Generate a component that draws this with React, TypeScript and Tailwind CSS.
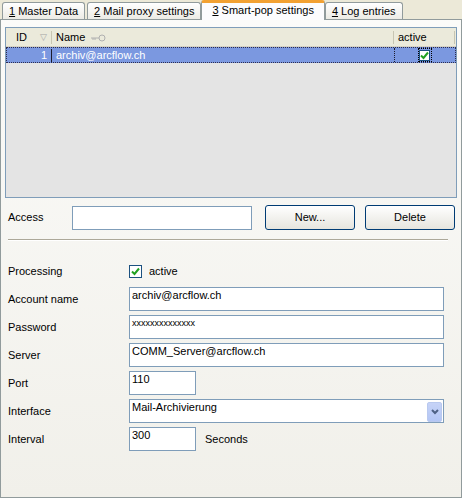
import React from "react";

const font = { fontFamily: '"Liberation Sans", Arial, sans-serif' };

function Check() {
  return (
    <svg width="9" height="9" viewBox="0 0 9 9">
      <path d="M1 4.5 L3.5 7 L8 1.5" fill="none" stroke="#21a121" strokeWidth="2" />
    </svg>
  );
}

function Tab({ n, label, active }: { n: string; label: string; active?: boolean }) {
  if (active) {
    return (
      <div className="relative z-10 -mx-[2px] -mb-px flex h-[20px] items-center rounded-t-[3px] border-x border-t-[3px] border-x-[#919b9c] border-t-[#f2a132] bg-[#fcfcfe] px-[10px] pb-[2px]">
        <span>
          <span className="underline">{n}</span> {label}
        </span>
      </div>
    );
  }
  return (
    <div className="flex h-[17px] items-center rounded-t-[3px] border border-b-0 border-[#919b9c] bg-gradient-to-b from-[#ffffff] to-[#ecebe5] px-[6px]">
      <span>
        <span className="underline">{n}</span> {label}
      </span>
    </div>
  );
}

function Field({ w, value, small }: { w: string; value?: string; small?: boolean }) {
  return (
    <div className={`h-[24px] ${w} border border-[#7f9db9] bg-white px-[2px] pt-[1px] ${small ? "text-[9px] leading-[12px]" : ""}`}>
      {value}
    </div>
  );
}

export default function App() {
  return (
    <div className="h-[498px] w-[462px] bg-[#ece9d8] text-[11px] leading-[13px] text-black" style={font}>
      <div className="flex h-[19px] items-end gap-[2px] pl-[2px]">
        <Tab n="1" label="Master Data" />
        <Tab n="2" label="Mail proxy settings" />
        <Tab n="3" label="Smart-pop settings" active />
        <Tab n="4" label="Log entries" />
      </div>
      <div className="h-[479px] w-[462px] border border-[#919b9c] bg-gradient-to-b from-[#fbfbf9] to-[#f1f0ea] px-[4px] pt-[7px]">
        {/* grid */}
        <div className="h-[171px] w-[452px] border border-[#7f9db9] bg-[#e4e4e4]">
          <div className="flex h-[19px] items-center border-b border-[#d6d2c2] bg-[#ebeadb] pt-[1px]">
            <div className="flex w-[46px] items-center border-r border-[#c7c5b2] pl-[10px]">
              <span>ID</span>
              <span className="ml-[13px] text-[9px] text-[#a6a6a6]">▽</span>
            </div>
            <div className="flex w-[342px] items-center gap-[5px] border-r border-[#c7c5b2] pl-[4px]">
              <span>Name</span>
              <svg width="16" height="8" viewBox="0 0 16 8">
                <path d="M1 4 H9 M3 4 V6 M5 4 V6" stroke="#b0b0b0" fill="none" />
                <circle cx="12" cy="4" r="3" stroke="#b0b0b0" fill="none" />
              </svg>
            </div>
            <div className="w-[61px] border-r border-[#c7c5b2] pl-[4px]">active</div>
          </div>
          <div className="flex h-[16px] items-center border border-dotted border-[#2d2d50] bg-[#7b98e0] text-white">
            <div className="w-[45px] border-r border-[#1c1c2c] pr-[4px] text-right">1</div>
            <div className="w-[342px] pl-[4px]">archiv@arcflow.ch</div>
            <div className="flex h-full w-[60px] items-center justify-center border-l border-dotted border-[#1c1c2c]">
              <div className="flex h-[14px] w-[14px] items-center justify-center border border-dotted border-black">
                <div className="flex h-[11px] w-[11px] items-center justify-center border border-[#1c5180] bg-white">
                  <Check />
                </div>
              </div>
            </div>
          </div>
        </div>
        {/* access row */}
        <div className="mt-[7px] flex items-center">
          <div className="w-[67px] pl-[3px]">Access</div>
          <div className="h-[24px] w-[180px] border border-[#7f9db9] bg-white" />
          <button className="ml-[13px] h-[25px] w-[90px] rounded-[3px] border border-[#003c74] bg-gradient-to-b from-[#ffffff] to-[#e6e5de]">New...</button>
          <button className="ml-[10px] h-[25px] w-[90px] rounded-[3px] border border-[#003c74] bg-gradient-to-b from-[#ffffff] to-[#e6e5de]">Delete</button>
        </div>
        <div className="ml-[3px] mt-[9px] h-[2px] w-[440px] border-t border-b border-t-[#aca899] border-b-white" />
        {/* form */}
        <div className="mt-[18px] flex flex-col gap-[4px] pl-[3px]">
          <div className="flex h-[24px] items-center">
            <div className="w-[121px]">Processing</div>
            <div className="flex h-[13px] w-[13px] items-center justify-center border border-[#1c5180] bg-white">
              <Check />
            </div>
            <span className="ml-[7px]">active</span>
          </div>
          <div className="flex items-center">
            <div className="w-[121px]">Account name</div>
            <Field w="w-[315px]" value="archiv@arcflow.ch" />
          </div>
          <div className="flex items-center">
            <div className="w-[121px]">Password</div>
            <Field w="w-[315px]" value="xxxxxxxxxxxxxx" small />
          </div>
          <div className="flex items-center">
            <div className="w-[121px]">Server</div>
            <Field w="w-[315px]" value="COMM_Server@arcflow.ch" />
          </div>
          <div className="flex items-center">
            <div className="w-[121px]">Port</div>
            <Field w="w-[67px]" value="110" />
          </div>
          <div className="flex items-center">
            <div className="w-[121px]">Interface</div>
            <div className="flex h-[24px] w-[315px] items-start border border-[#7f9db9] bg-white pl-[2px] pt-[1px]">
              <span className="flex-1">Mail-Archivierung</span>
              <div className="mr-[1px] mt-[1px] flex h-[20px] w-[15px] items-center justify-center rounded-[2px] border border-[#b9c9ef] bg-gradient-to-b from-[#c6d3f7] to-[#b3c6f5]">
                <svg width="8" height="6" viewBox="0 0 8 6">
                  <path d="M1 1 L4 4 L7 1" stroke="#4d6185" strokeWidth="2" fill="none" />
                </svg>
              </div>
            </div>
          </div>
          <div className="flex items-center">
            <div className="w-[121px]">Interval</div>
            <Field w="w-[67px]" value="300" />
            <span className="ml-[9px]">Seconds</span>
          </div>
        </div>
      </div>
    </div>
  );
}
